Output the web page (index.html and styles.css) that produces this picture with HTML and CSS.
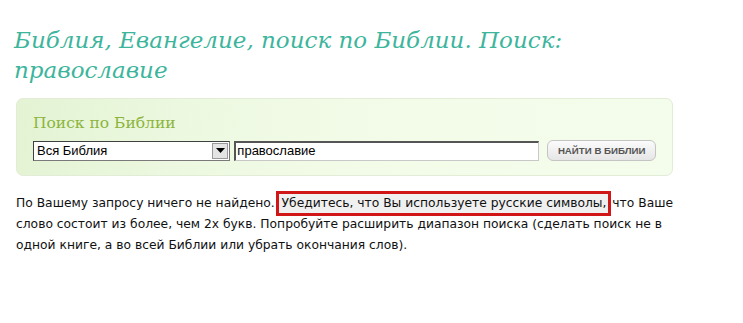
FILE: index.html
```html
<!DOCTYPE html>
<html lang="ru">
<head>
<meta charset="utf-8">
<title>Поиск по Библии</title>
<link rel="stylesheet" href="styles.css">
</head>
<body>
<div class="page">
  <h1 class="title">Библия, Евангелие, поиск по Библии. Поиск: православие</h1>
  <div class="search-box">
    <div class="search-title">Поиск по Библии</div>
    <div class="search-row">
      <div class="select">
        <span class="select-value">Вся Библия</span>
        <span class="select-arrow"><svg width="9" height="5" viewBox="0 0 9 5"><path d="M0 0h9L4.5 5z" fill="#000"/></svg></span>
      </div>
      <div class="input">православие</div>
      <button class="btn">НАЙТИ В БИБЛИИ</button>
    </div>
  </div>
  <p class="result">По Вашему запросу ничего не найдено. <span class="mark">Убедитесь, что Вы используете русские символы,</span> что Ваше слово состоит из более, чем 2х букв. Попробуйте расширить диапазон поиска (сделать поиск не в одной книге, а во всей Библии или убрать окончания слов).</p>
</div>
</body>
</html>
```
FILE: styles.css
```css
html, body {
  margin: 0;
  padding: 0;
  background: #fff;
}
.page {
  padding: 25px 60px 0 16px;
}
.title {
  margin: 0 0 13px -2px;
  font-family: "DejaVu Serif", Georgia, serif;
  font-style: italic;
  font-weight: normal;
  font-size: 23px;
  line-height: 30px;
  color: #3cb59c;
}
.search-box {
  width: 657px;
  box-sizing: border-box;
  height: 78px;
  border: 1px solid #e2ecd6;
  border-radius: 7px;
  background: linear-gradient(100deg, #e3f3d3 0%, #eef9e2 30%, #f3fce9 60%, #f4fdeb 100%);
  padding: 14px 16px 0 16px;
}
.search-title {
  font-family: "DejaVu Serif", Georgia, serif;
  font-size: 15.5px;
  line-height: 20px;
  color: #8cb43c;
  margin-bottom: 7px;
}
.search-row {
  display: flex;
  align-items: center;
}
.select {
  width: 198px;
  height: 20px;
  box-sizing: border-box;
  border: 1px solid #7a7a7a;
  border-top-color: #404040;
  border-left-color: #404040;
  background: #fff;
  display: flex;
  align-items: center;
  justify-content: space-between;
  font-family: "Liberation Sans", Arial, sans-serif;
  font-size: 13px;
}
.select-value {
  padding-left: 3px;
}
.select-arrow {
  width: 16px;
  height: 16px;
  margin-right: 1px;
  box-sizing: border-box;
  background: #e4e4e4;
  border: 1px solid #9a9a9a;
  display: flex;
  align-items: center;
  justify-content: center;
}
.input {
  margin-left: 4px;
  width: 306px;
  height: 20px;
  box-sizing: border-box;
  border: 1px solid #c8c8c8;
  border-top: 2px solid #555;
  border-left: 2px solid #555;
  background: #fff;
  font-family: "Liberation Sans", Arial, sans-serif;
  font-size: 13px;
  line-height: 16px;
  padding-left: 1px;
}
.btn {
  margin-left: 8px;
  width: 109px;
  height: 21px;
  border: 1px solid #c4c4c4;
  border-radius: 6px;
  background: linear-gradient(#fbfbfb, #e6e6e6);
  font-family: "Liberation Sans", Arial, sans-serif;
  font-weight: bold;
  font-size: 9.7px;
  color: #555;
  padding: 0;
}
.result {
  margin: 17px 0 0 0;
  font-family: "DejaVu Sans", Tahoma, sans-serif;
  font-size: 12.3px;
  line-height: 21px;
  color: #111;
}
.mark {
  background: #f0f0f0;
  box-shadow: 0 0 0 3px #d01616;
  padding: 2px 2px 3px 3px;
}
```
